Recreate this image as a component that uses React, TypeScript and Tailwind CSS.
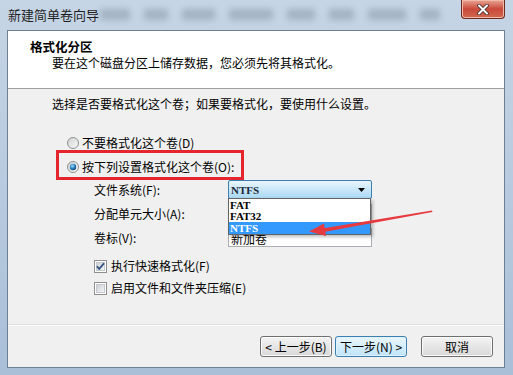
import React from "react";

const cjk = "font-['Noto_Sans_CJK_SC','Noto_Sans',sans-serif]";

function Radio({ checked }: { checked?: boolean }) {
  return (
    <svg width="12" height="12" viewBox="0 0 12 12" className="shrink-0">
      <defs>
        <linearGradient id="rb" x1="0" y1="0" x2="1" y2="1">
          <stop offset="0" stopColor="#cfd0d1" />
          <stop offset="1" stopColor="#fbfbfb" />
        </linearGradient>
        <radialGradient id="rd" cx="0.4" cy="0.35" r="0.7">
          <stop offset="0" stopColor="#a6dcf8" />
          <stop offset="0.55" stopColor="#2c84c4" />
          <stop offset="1" stopColor="#0b3d63" />
        </radialGradient>
      </defs>
      <circle cx="6" cy="6" r="5.5" fill="url(#rb)" stroke="#8e8f8f" strokeWidth="1" />
      {checked && <circle cx="6" cy="6" r="3.2" fill="url(#rd)" />}
    </svg>
  );
}

function Check({ checked }: { checked?: boolean }) {
  return (
    <svg width="13" height="13" viewBox="0 0 13 13" className="shrink-0">
      <defs>
        <linearGradient id="cb" x1="0" y1="0" x2="1" y2="1">
          <stop offset="0" stopColor="#cbcfd5" />
          <stop offset="1" stopColor="#f6f6f6" />
        </linearGradient>
      </defs>
      <rect x="0.5" y="0.5" width="12" height="12" fill="#fff" stroke="#8f8f8f" />
      <rect x="2.5" y="2.5" width="8" height="8" fill="url(#cb)" stroke="#c4c9d0" />
      {checked && (
        <path d="M3 6.2 L5.2 9 L10 3.2" fill="none" stroke="#2b4e7a" strokeWidth="1.8" strokeLinejoin="round" />
      )}
    </svg>
  );
}

function WinButton({ children, primary }: { children: React.ReactNode; primary?: boolean }) {
  return (
    <div
      className={
        "flex h-[21px] w-[72px] items-center justify-center rounded-[3px] border text-[12px] leading-[16px] " +
        (primary
          ? "border-[#3c7fb1] bg-gradient-to-b from-[#eaf6fd] to-[#bfe4f9] shadow-[inset_0_0_0_1px_#dff2fc]"
          : "border-[#707070] bg-gradient-to-b from-[#f4f4f4] to-[#d8d8d8] shadow-[inset_0_0_0_1px_#fcfcfc]")
      }
    >
      {children}
    </div>
  );
}

export default function App() {
  return (
    <div className={`relative h-[375px] w-[513px] overflow-hidden bg-gradient-to-b from-[#c6d5e5] to-[#a9bfd8] text-black ${cjk}`}>
      {/* title bar */}
      <div className="relative flex h-[30px] items-center pl-[8px]">
        <div className="absolute left-[100px] top-[9px] h-[11px] w-[340px] opacity-30 blur-[3px]">
          <div className="flex h-full gap-[14px]">
            <div className="w-[30px] bg-[#556677]" />
            <div className="w-[24px] bg-[#556677]" />
            <div className="w-[34px] bg-[#556677]" />
            <div className="w-[44px] bg-[#556677]" />
            <div className="w-[28px] bg-[#556677]" />
            <div className="w-[26px] bg-[#556677]" />
            <div className="w-[38px] bg-[#556677]" />
            <div className="w-[20px] bg-[#556677]" />
          </div>
        </div>
        <span className="relative text-[13px] leading-[16px] text-[#1e1e1e]">新建简单卷向导</span>
        <div className="absolute right-[8px] top-0 flex h-[19px] w-[44px] items-center justify-center rounded-b-[4px] border border-t-0 border-[#6d2a22] bg-gradient-to-b from-[#e8a493] via-[#c9483a] to-[#d0674f] shadow-[inset_0_0_0_1px_#f0b9a8]">
          <svg width="12" height="11" viewBox="0 0 12 11">
            <path d="M2 1.5 L10 9.5 M10 1.5 L2 9.5" stroke="#3a2a2a" strokeWidth="3.6" strokeLinecap="round" />
            <path d="M2 1.5 L10 9.5 M10 1.5 L2 9.5" stroke="#ffffff" strokeWidth="2" strokeLinecap="round" />
          </svg>
        </div>
      </div>

      {/* client area */}
      <div className="ml-[7px] flex h-[338px] w-[498px] flex-col border border-[#6d7f93] bg-[#f0f0f0]">
        {/* header */}
        <div className="h-[58px] border-b border-[#a0a0a0] bg-white pl-[22px] pt-[8px]">
          <div className="text-[12.5px] font-bold leading-[16px]">格式化分区</div>
          <div className="pl-[22px] text-[12px] leading-[16px]">要在这个磁盘分区上储存数据，您必须先将其格式化。</div>
        </div>

        {/* body */}
        <div className="relative flex-1 pt-[7px]">
          <div className="pl-[44px] text-[12px] leading-[16px]">选择是否要格式化这个卷；如果要格式化，要使用什么设置。</div>

          <div className="mt-[23px] flex h-[16px] items-center gap-[3px] pl-[59px] text-[12px] leading-[16px]">
            <Radio />
            <span>不要格式化这个卷(D)</span>
          </div>
          <div className="mt-[8px] flex h-[16px] items-center gap-[3px] pl-[59px] text-[12px] leading-[16px]">
            <Radio checked />
            <span>按下列设置格式化这个卷(O):</span>
          </div>

          {/* red annotation box */}
          <div className="absolute left-[48px] top-[61px] h-[30px] w-[188px] border-[3px] border-[#e5262f]" />

          <div className="ml-[86px] mt-[5px] grid grid-cols-[134px_144px] gap-y-[5px] text-[12px] leading-[16px]">
            <div className="flex h-[19px] items-center">文件系统(F):</div>
            <div className="relative z-10">
              <div className="flex h-[19px] items-center justify-between rounded-[2px] border border-[#3c7fb1] bg-gradient-to-b from-[#eaf6fd] to-[#a9d8f4] pl-[2px] pr-[6px]">
                <span className="font-['Liberation_Serif',serif] text-[11px] font-bold leading-[12px] text-[#1a2a3a]">NTFS</span>
                <svg width="7" height="4" viewBox="0 0 7 4">
                  <path d="M0 0 H7 L3.5 4 Z" fill="#000" />
                </svg>
              </div>
              <div className="absolute left-0 top-[18px] w-[143px] border border-[#646464] bg-white pt-[1px] shadow-[2px_2px_3px_rgba(0,0,0,0.25)] font-['Liberation_Serif',serif] text-[11px] font-bold leading-[11px]">
                <div className="h-[11px] pl-[1px]">FAT</div>
                <div className="h-[11px] pl-[1px]">FAT32</div>
                <div className="h-[12px] bg-[#3399ff] pl-[1px] pt-[1px] text-white">NTFS</div>
              </div>
            </div>
            <div className="flex h-[19px] items-center">分配单元大小(A):</div>
            <div className="h-[19px] border border-[#abadb3] bg-white" />
            <div className="flex h-[19px] items-center">卷标(V):</div>
            <div className="flex h-[19px] items-end overflow-hidden border border-[#abadb3] bg-white pl-[2px]">
              <span className="leading-[15px]">新加卷</span>
            </div>
          </div>

          <div className="mt-[11px] flex h-[16px] items-center gap-[4px] pl-[86px] text-[12px] leading-[16px]">
            <Check checked />
            <span>执行快速格式化(F)</span>
          </div>
          <div className="mt-[6px] flex h-[16px] items-center gap-[4px] pl-[86px] text-[12px] leading-[16px]">
            <Check />
            <span>启用文件和文件夹压缩(E)</span>
          </div>
        </div>

        {/* footer */}
        <div className="flex h-[43px] items-start justify-end border-t border-[#dfdfdf] pr-[11px] pt-[11px] shadow-[inset_0_1px_0_#ffffff]">
          <div className="flex gap-[3px]">
            <WinButton>&lt; 上一步(B)</WinButton>
            <WinButton primary>下一步(N) &gt;</WinButton>
          </div>
          <div className="ml-[14px]">
            <WinButton>取消</WinButton>
          </div>
        </div>
      </div>

      {/* red arrow annotation */}
      <svg className="pointer-events-none absolute left-0 top-0 z-20" width="513" height="375" viewBox="0 0 513 375">
        <path d="M432 210.5 L322 228.5 L322.6 232.2 L432.4 212 Z" fill="#e63a3f" />
        <path d="M309 231.5 L324 223.5 L326 236 Z" fill="#e63a3f" />
      </svg>
    </div>
  );
}
